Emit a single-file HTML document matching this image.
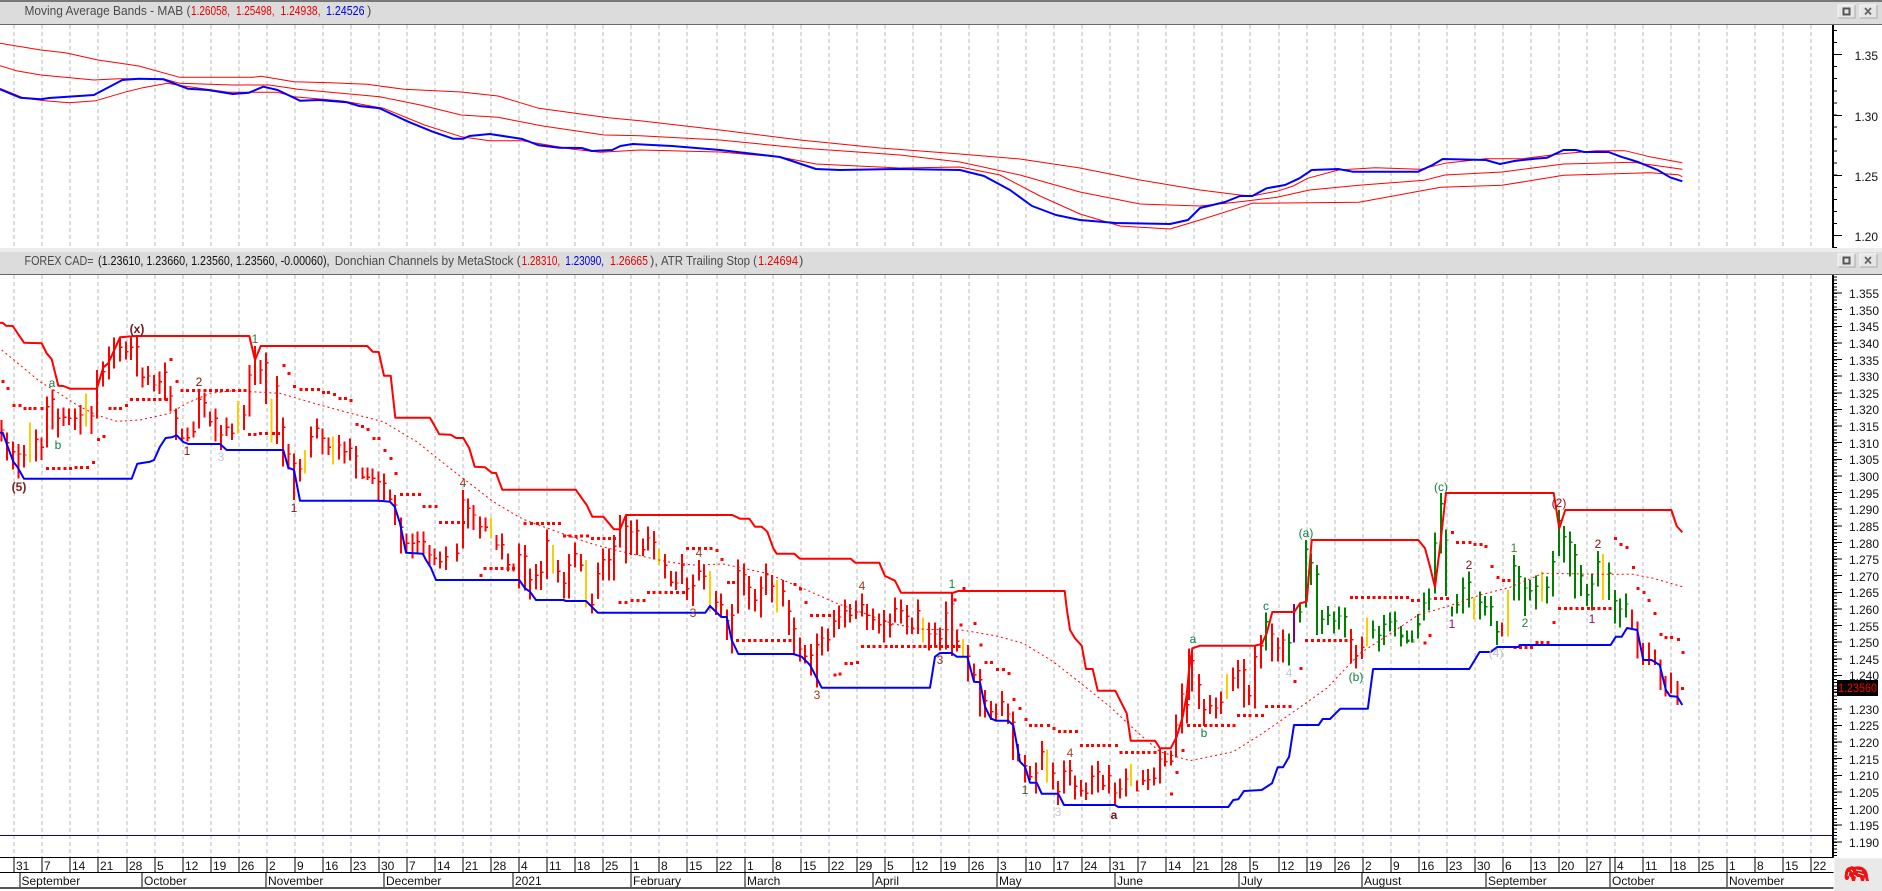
<!DOCTYPE html>
<html><head><meta charset="utf-8"><title>Chart</title>
<style>
html,body{margin:0;padding:0;background:#fff;width:1882px;height:891px;overflow:hidden}
svg{display:block}
text{font-family:"Liberation Sans",Arial,sans-serif;font-size:12px}
text.t{font-size:13px}
.b path{fill:none;stroke-width:6;shape-rendering:crispEdges}
.d{fill:none;stroke:#f00;stroke-width:9;stroke-linecap:square;shape-rendering:crispEdges}
.l{fill:none;stroke-linejoin:round}
.w text{text-anchor:middle;font-size:12px}
</style></head><body>
<svg width="1882" height="891" viewBox="0 0 1882 891" xmlns="http://www.w3.org/2000/svg">
<rect width="1882" height="891" fill="#fff"/>
<!-- frames -->
<rect y="0" width="1882" height="2" fill="#777"/>
<rect y="2" width="1882" height="22" fill="#dcdcdc"/>
<rect y="24" width="1882" height="1" fill="#6a6a6a"/>
<rect y="248" width="1882" height="4" fill="#ececec"/>
<rect y="252" width="1882" height="22" fill="#dcdcdc"/>
<rect y="274" width="1882" height="1" fill="#6a6a6a"/>
<!-- grid -->
<path fill="none" stroke="#b8b8b8" stroke-dasharray="4 3" shape-rendering="crispEdges" d="M14 25V248M42 25V248M70 25V248M98 25V248M127 25V248M155 25V248M183 25V248M211 25V248M239 25V248M267 25V248M295 25V248M323 25V248M351 25V248M379 25V248M407 25V248M435 25V248M463 25V248M491 25V248M519 25V248M547 25V248M575 25V248M603 25V248M631 25V248M659 25V248M687 25V248M717 25V248M745 25V248M773 25V248M801 25V248M829 25V248M857 25V248M885 25V248M913 25V248M941 25V248M969 25V248M998 25V248M1026 25V248M1054 25V248M1082 25V248M1110 25V248M1138 25V248M1166 25V248M1194 25V248M1222 25V248M1250 25V248M1279 25V248M1307 25V248M1335 25V248M1363 25V248M1391 25V248M1419 25V248M1447 25V248M1475 25V248M1503 25V248M1531 25V248M1559 25V248M1587 25V248M1615 25V248M1643 25V248M1671 25V248M1699 25V248M1727 25V248M1755 25V248M1783 25V248M1811 25V248"/>
<path fill="none" stroke="#b8b8b8" stroke-dasharray="4 3" shape-rendering="crispEdges" d="M14 275V857M42 275V857M70 275V857M98 275V857M127 275V857M155 275V857M183 275V857M211 275V857M239 275V857M267 275V857M295 275V857M323 275V857M351 275V857M379 275V857M407 275V857M435 275V857M463 275V857M491 275V857M519 275V857M547 275V857M575 275V857M603 275V857M631 275V857M659 275V857M687 275V857M717 275V857M745 275V857M773 275V857M801 275V857M829 275V857M857 275V857M885 275V857M913 275V857M941 275V857M969 275V857M998 275V857M1026 275V857M1054 275V857M1082 275V857M1110 275V857M1138 275V857M1166 275V857M1194 275V857M1222 275V857M1250 275V857M1279 275V857M1307 275V857M1335 275V857M1363 275V857M1391 275V857M1419 275V857M1447 275V857M1475 275V857M1503 275V857M1531 275V857M1559 275V857M1587 275V857M1615 275V857M1643 275V857M1671 275V857M1699 275V857M1727 275V857M1755 275V857M1783 275V857M1811 275V857"/>
<!-- title text -->
<text class="t" x="24.500" y="15" fill="#4a4a4a" textLength="166" lengthAdjust="spacingAndGlyphs">Moving Average Bands - MAB (</text>
<text class="t" x="191" y="15" fill="#e80000" textLength="39" lengthAdjust="spacingAndGlyphs">1.26058,</text>
<text class="t" x="236" y="15" fill="#e80000" textLength="38.500" lengthAdjust="spacingAndGlyphs">1.25498,</text>
<text class="t" x="280.500" y="15" fill="#e80000" textLength="40" lengthAdjust="spacingAndGlyphs">1.24938,</text>
<text class="t" x="326" y="15" fill="#0000e0" textLength="38.500" lengthAdjust="spacingAndGlyphs">1.24526</text>
<text class="t" x="367" y="15" fill="#4a4a4a">)</text>
<text class="t" x="24.500" y="265" fill="#4a4a4a" textLength="69" lengthAdjust="spacingAndGlyphs">FOREX CAD=</text>
<text class="t" x="98" y="265" fill="#111" textLength="231.500" lengthAdjust="spacingAndGlyphs">(1.23610, 1.23660, 1.23560, 1.23560, -0.00060),</text>
<text class="t" x="334.700" y="265" fill="#4a4a4a" textLength="186" lengthAdjust="spacingAndGlyphs">Donchian Channels by MetaStock (</text>
<text class="t" x="521.600" y="265" fill="#e80000" textLength="38.500" lengthAdjust="spacingAndGlyphs">1.28310,</text>
<text class="t" x="565.300" y="265" fill="#0000e0" textLength="38.700" lengthAdjust="spacingAndGlyphs">1.23090,</text>
<text class="t" x="610" y="265" fill="#e80000" textLength="38" lengthAdjust="spacingAndGlyphs">1.26665</text>
<text class="t" x="650" y="265" fill="#4a4a4a" textLength="8" lengthAdjust="spacingAndGlyphs">),</text>
<text class="t" x="661" y="265" fill="#4a4a4a" textLength="96" lengthAdjust="spacingAndGlyphs">ATR Trailing Stop (</text>
<text class="t" x="758" y="265" fill="#e80000" textLength="40" lengthAdjust="spacingAndGlyphs">1.24694</text>
<text class="t" x="799" y="265" fill="#4a4a4a">)</text>
<!-- window buttons -->
<g shape-rendering="crispEdges">
<rect x="1838" y="5" width="17" height="13" fill="#e6e6e6"/><path d="M1838 18V5H1855" stroke="#f8f8f8" fill="none"/><path d="M1855 5V18H1838" stroke="#aaa" fill="none"/><rect x="1843.500" y="8.500" width="6" height="6" fill="none" stroke="#555" stroke-width="2"/>
<rect x="1860" y="5" width="17" height="13" fill="#e6e6e6"/><path d="M1860 18V5H1877" stroke="#f8f8f8" fill="none"/><path d="M1877 5V18H1860" stroke="#aaa" fill="none"/>
<rect x="1838" y="254" width="17" height="13" fill="#e6e6e6"/><path d="M1838 267V254H1855" stroke="#f8f8f8" fill="none"/><path d="M1855 254V267H1838" stroke="#aaa" fill="none"/><rect x="1843.500" y="257.500" width="6" height="6" fill="none" stroke="#555" stroke-width="2"/>
<rect x="1860" y="254" width="17" height="13" fill="#e6e6e6"/><path d="M1860 267V254H1877" stroke="#f8f8f8" fill="none"/><path d="M1877 254V267H1860" stroke="#aaa" fill="none"/>
</g>
<path d="M1865 8l6 6.500M1871 8l-6 6.500M1865 257l6 6.500M1871 257l-6 6.500" stroke="#666" stroke-width="1.800" fill="none"/>
<!-- panel 1 lines -->
<g class="l" stroke="#f00" stroke-width="1">
<polyline points="0,43.300 40.800,50 65.300,52.700 98,60 138.800,66 179.600,77.300 253,77.300 261,76.300 293.900,81.700 330.600,82.700 367.300,84.300 379.600,86 404,89.300 461.200,92 498,96 538.800,108.300 608.200,117.700 640,120.700 720,130 800,140 880,148 960,154 1020,159 1080,168 1140,180 1200,190 1240,195 1252.300,196 1278.900,190.700 1293.200,186 1307.600,178.300 1338.300,170 1375.100,167.700 1420.200,169.300 1444.800,163.300 1485.700,158.700 1522.600,158.700 1559.400,154 1596.300,150.700 1625,150.700 1649.500,156.700 1682.300,162.700"/>
<polyline points="0,65.700 16.300,70.700 40.800,75 93.900,80 118.400,78.700 163.300,78.700 179.600,83.300 232.700,85 269.400,85 298,89.300 379.600,96.700 420.400,105 461.200,115 498,117.300 542.900,126 604,135 640,135.700 720,140 800,148 900,155 960,162 1020,175 1080,192 1140,204 1200,206 1240,201.700 1276.900,197.300 1309.600,190 1358.800,185.300 1424.300,180.300 1444.800,175 1502,172 1563.500,164 1633.100,162.300 1682.300,169.300"/>
<polyline points="0,88.300 24.500,98.300 44.900,100.700 69.400,102.700 95.900,100.700 126.500,91.700 142.900,87.700 167.300,83.300 183.700,86 228.600,92.300 277.600,92.300 293.900,96.700 342.900,101 383.700,108.300 424.500,125 461.200,136.700 489.800,140.700 522.400,140.700 571.400,149 600,152.300 640,150 720,152 780,157 816,164 900,168 960,167 1000,175 1040,196 1080,214 1120,226 1170,229 1200,220 1240,207.300 1252.300,203.300 1358.800,202.300 1440.700,187.300 1502,185.300 1563.500,175.300 1649.500,172.700 1678.200,174.700 1682.300,176.700"/>
</g>
<polyline class="l" stroke="#00f" stroke-width="2" points="0,89.300 20.400,97.700 40.800,99.300 49,98 93.900,95 122.400,80 138.800,78.700 163.300,79.300 187.800,88.700 208.200,90 232.700,94 249,92.700 263.300,86.700 277.600,90 300,100.700 318.400,100 346.900,102.300 359.200,106 379.600,108.300 408.200,121.700 432.700,131.700 453,138.700 463.300,138.700 469.400,136 489.800,134 522.400,139 538.800,145.300 559.200,147.700 581.600,148 591.800,151 612.200,150 620.400,146 632.700,144 672,146 720,150 780,157 816,169 840,170 900,169 960,170 984,176 1010,190 1032,206 1056,215 1080,220 1116,223 1170,224 1188,220 1200,208 1225,202 1240,196 1252.300,196 1266.600,188.300 1285,185 1299.400,178.300 1311.700,170 1338.300,169 1352.600,171.700 1418.100,171.700 1432.500,165 1442.700,159 1485.700,160 1500,164 1514.400,161 1534.800,158.700 1547.100,157.700 1563.500,150 1575.800,150 1584,152 1608.500,152 1620.800,156.700 1637.200,161.700 1657.700,170 1670,177.300 1682.300,181.300"/>
<!-- bars -->
<g class="b" transform="translate(0,260) scale(.33333)">
<path id="r3" stroke="#f00" d="M5 480V545M21 518V602M39 545V628M56 552V655M72 555V622M108 508V605M124 532V600M141 410V562M157 388V508M174 445V532M191 442V498M207 445V495M225 445V510M242 435V523M275 438V522M291 330V475M309 305V380M327 260V358M342 232V326M360 232V305M378 245V298M393 232V300M411 230V350M427 322V382M444 318V375M462 345V395M478 335V402M495 307V422M511 378V455M528 445V540M546 505V545M562 503V545M580 485V532M597 388V505M613 398V472M630 455V500M646 445V545M663 495V570M680 472V528M696 490V540M732 435V510M748 315V470M765 258V375M781 300V372M798 278V432M831 348V552M849 472V620M865 552V628M882 580V720M900 597V665M933 500V593M951 475V535M968 505V583M985 532V585M1017 525V598M1034 545V610M1050 535V602M1068 558V655M1087 622V657M1102 622V660M1118 625V672M1135 635V722M1152 640V720M1170 688V725M1185 705V795M1203 772V880M1220 820V878M1237 820V895M1252 815V880M1270 815V885M1288 855V915M1303 865V915M1320 875V925M1338 860V930M1371 850V905M1389 690V865M1404 715V805M1421 735V810M1440 770V835M1456 772V815M1490 825V870"/>
<use href="#r3" x="5" stroke-dasharray="0 28 4 2000"/>
<path stroke="#fc0" d="M90 487V608M258 400V500M714 423V520M815 415V548M915 570V640M999 530V613M1473 772V835"/>
</g>
<g class="b" transform="translate(480,400) scale(.33333)">
<path id="r6" stroke="#f00" d="M66 400V478M84 460V515M100 490V515M117 430V565M135 435V572M150 505V598M168 492V568M183 483V570M201 388V537M234 480V548M252 516V596M267 462V595M285 427V503M303 462V515M336 580V640M354 487V597M369 445V542M387 445V542M402 405V542M420 345V442M438 345V490M453 362V465M471 358V465M489 415V468M504 380V452M522 393V478M555 462V535M573 513V560M588 515V570M606 462V552M621 532V600M639 523V618M657 480V542M672 495V568M708 573V645M723 580V650M741 628V720M756 612V760M774 478V640M792 490V587M807 528V628M825 567V635M843 530V652M858 490V585M876 525V607M909 540V620M927 600V705M942 652V760M960 713V785M975 735V790M993 732V827M1011 700V862M1026 680V767M1044 685V755M1062 630V712M1077 617V687M1095 598V682M1110 612V668M1128 602V657M1146 580V650M1161 612V690M1179 625V690M1197 640V700M1212 630V728M1230 640V712M1245 592V668M1263 598V670M1281 615V703M1296 652V702M1314 598V702M1347 668V752M1365 668V742M1380 682V752M1398 605V748M1416 578V768M1431 690V755M1464 735V845M1482 790V845"/>
<use href="#r6" x="5" stroke-dasharray="0 32 4 2000"/>
<path stroke="#fc0" d="M219 435V520M318 480V622M537 445V495M690 513V635M891 540V638M1329 652V728M1449 717V770"/>
</g>
<g class="b" transform="translate(960,620) scale(.33333)">
<path id="r9" stroke="#f00" d="M60 147V290M75 210V292M93 243V300M108 250V302M126 213V288M144 250V312M159 275V420M174 372V425M195 405V488M210 438V480M228 427V520M246 363V450M279 428V508M294 483V555M312 422V520M330 420V497M345 467V538M363 480V530M378 488V540M396 437V523M414 423V517M429 465V510M447 435V520M465 487V555M480 475V536M498 445V530M531 482V515M549 450V495M564 447V510M582 443V497M600 385V490M615 393V440M633 392V437M648 283V412M666 190V340M681 222V310M687 85V240M696 90V215M717 162V267M732 237V318M750 225V282M768 232V296M783 215V282M819 142V213M834 120V205M852 117V262M867 195V255M885 78V265"/>
<use href="#r9" x="5" stroke-dasharray="0 30 4 2000"/>
<path stroke="#fc0" d="M261 388V488M513 432V498M801 162V237"/>
</g>
<g class="b" transform="translate(960,400) scale(.33333)">
<path id="r7" stroke="#f00" d="M903 705V805M936 670V785M954 712V785M969 688V787M1173 687V790M1188 735V805M1206 710V777"/>
<use href="#r7" x="5" stroke-dasharray="0 30 4 2000"/>
<path stroke="#fc0" d="M1221 652V740"/>
<path id="g7" stroke="#008000" d="M918 637V752M987 700V797M1020 608V668M1038 420V622M1053 460V555M1071 495V705M1086 630V702M1104 618V675M1122 635V700M1137 620V688M1155 622V712M1239 662V715M1257 678V755M1272 645V735M1290 638V695M1305 635V710M1323 678V740M1341 692V728M1356 692V728M1374 643V715"/>
<use href="#g7" x="5" stroke-dasharray="0 26 4 2000"/>
<path stroke="#800080" d="M1002 612V727"/>
</g>
<g class="b" transform="translate(1400,340) scale(.33333)">
<path id="g8" stroke="#008000" d="M3 858V920M21 872V910M36 875V908M54 822V895M72 757V842M87 745V812M105 577V760M123 459V640M138 568V768M156 800V830M171 762V820M189 712V820M207 695V803M240 755V838M255 768V827M273 768V858M291 843V915M342 645V782M357 678V782M375 712V828M390 720V782M408 707V808M441 710V790M459 633V770M477 510V648M492 558V668M510 575V710M525 612V775M543 675V768M561 732V798M576 700V812M594 633V740M627 668V780M645 750V850M660 775V862M678 760V832"/>
<use href="#g8" x="5" stroke-dasharray="0 30 4 2000"/>
<path stroke="#fc0" d="M222 772V838M324 750V890M426 695V785M609 642V780"/>
<path stroke="#f00" d="M306 847V890"/>
</g>
<g transform="translate(1240,560)" fill="none" stroke="#f00" stroke-width="2" shape-rendering="crispEdges">
<path d="M392 49.300V68.300M397.500 61.700V98.300M403 83V105M409 82.700V105M415 89.300V105M420.500 99.300V130M425.500 116V136.700M431 112.300V133.300M437.500 121V145"/>
</g>
<!-- trailing stop dots -->
<g transform="translate(0,260) scale(.33333)"><path class="d" d="M9 365h0M24 385h0M42 436h0M60 436h0M75 445h0M90 445h0M105 445h0M126 445h0M142 625h0M160 625h0M177 625h0M195 625h0M212 625h0M228 622h0M245 622h0M262 622h0M280 607h0M295 538h0M312 529h0M330 445h0M345 445h0M362 445h0M380 437h0M395 418h0M412 418h0M430 418h0M447 418h0M463 418h0M480 418h0M500 418h0M513 298h0M531 364h0M546 391h0M563 391h0M580 391h0M597 391h0M615 391h0M632 391h0M650 391h0M665 391h0M682 391h0M700 391h0M718 391h0M735 391h0M748 523h0M765 523h0M782 520h0M800 520h0M820 520h0M835 520h0M852 316h0M867 340h0M884 379h0M903 388h0M920 388h0M937 388h0M955 388h0M970 397h0M985 397h0M1003 403h0M1020 415h0M1037 415h0M1053 421h0M1071 493h0M1087 499h0M1104 508h0M1122 535h0M1137 535h0M1155 571h0M1173 595h0M1188 640h0M1205 703h0M1222 703h0M1240 703h0M1258 703h0M1272 739h0M1290 739h0M1308 739h0M1322 787h0M1340 787h0M1357 787h0M1375 787h0M1390 787h0"/></g>
<g transform="translate(480,400) scale(.33333)"><path class="d" d="M3 526h0M15 505h0M33 505h0M50 505h0M66 505h0M84 505h0M100 505h0M135 370h0M155 370h0M172 370h0M187 370h0M205 370h0M220 370h0M238 370h0M253 408h0M270 408h0M288 410h0M305 408h0M322 408h0M338 415h0M355 415h0M372 415h0M388 415h0M403 415h0M420 607h0M438 607h0M456 601h0M474 601h0M492 601h0M505 577h0M522 577h0M540 577h0M558 577h0M575 577h0M592 577h0M610 577h0M622 445h0M640 445h0M658 445h0M676 445h0M693 445h0M711 451h0M726 478h0M745 547h0M760 547h0M773 721h0M790 721h0M808 721h0M825 721h0M843 721h0M860 721h0M878 721h0M895 721h0M913 721h0M930 721h0M945 553h0M962 567h0M978 607h0M995 646h0M1012 646h0M1030 646h0M1048 646h0M1065 825h0M1080 822h0M1098 790h0M1115 790h0M1132 787h0M1148 739h0M1165 739h0M1182 739h0M1200 739h0M1218 739h0M1235 739h0M1250 739h0M1268 739h0M1285 739h0M1302 739h0M1320 739h0M1335 739h0M1352 739h0M1368 739h0M1385 739h0M1403 739h0M1420 739h0M1437 739h0M1452 565h0"/></g>
<g transform="translate(960,620) scale(.33333)"><path class="d" d="M-15 -60h0M3 15h0M45 10h0M63 75h0M78 127h0M95 127h0M113 148h0M130 148h0M147 160h0M162 238h0M180 265h0M198 298h0M212 316h0M228 316h0M245 316h0M265 316h0M282 325h0M298 334h0M315 334h0M332 334h0M349 334h0M365 376h0M382 376h0M398 376h0M415 376h0M432 376h0M449 376h0M470 376h0M483 397h0M500 397h0M517 397h0M534 397h0M550 397h0M567 397h0M585 397h0M635 522h0M651 457h0M669 391h0M686 316h0M703 316h0M719 316h0M736 316h0M753 316h0M770 316h0M788 316h0M805 316h0M822 316h0M836 286h0M853 286h0M870 286h0M890 286h0M907 286h0M920 259h0M937 259h0M955 259h0M972 259h0M990 259h0M1005 184h0M1023 145h0"/></g>
<g transform="translate(960,400) scale(.33333)"><path class="d" d="M1040 721h0M1058 721h0M1075 721h0M1092 721h0M1108 721h0M1125 721h0M1142 721h0M1158 721h0M1175 592h0M1190 592h0M1208 592h0M1225 592h0M1242 592h0M1258 592h0M1275 592h0M1292 592h0M1310 592h0"/></g>
<g transform="translate(1400,340) scale(.33333)"><path class="d" d="M5 772h0M22 772h0M38 781h0M55 781h0M75 909h0M90 886h0M107 775h0M125 775h0M142 775h0M158 577h0M173 607h0M190 607h0M210 607h0M225 613h0M243 613h0M258 619h0M276 679h0M294 712h0M310 721h0M327 721h0M345 922h0M361 922h0M378 922h0M395 922h0M411 907h0M426 907h0M444 907h0M462 847h0M478 805h0M496 805h0M513 805h0M531 805h0M548 805h0M565 805h0M580 805h0M597 805h0M613 805h0M630 805h0M647 595h0M663 613h0M681 622h0M700 682h0M714 745h0M732 757h0M747 781h0M765 820h0M783 883h0M798 892h0M815 892h0M835 898h0M849 937h0M848 1045h0"/></g>
<!-- MA dotted -->
<polyline class="l" stroke="#f00" stroke-width="1" stroke-dasharray="2 3" points="1.700,350 20,365 40,381.700 56.700,391.700 76.700,405 96.700,415 116.700,421.300 140,420 170,413.300 186.700,403.300 210,393.300 233.300,390.700 280,393.300 320,405 353.300,414 383.300,421.700 416.700,441.700 450,468.300 481.700,492.700 493.300,501.700 518.300,516.700 526.700,520.700 560,532.700 590,543.300 615,550 646.700,557.300 670,562.300 693.300,565 723.300,564 766.700,573.300 806.700,590 836.700,603.300 893.300,624 923.300,629.300 961.700,630 996.700,636 1023.300,643.300 1053.300,661.700 1076.700,680 1110,706.700 1136.700,731.700 1160,751.700 1190,760.700 1233.300,751.700 1260,735 1303.300,705 1326.700,688.300 1360,653.300 1393.300,631.700 1418.300,615 1446.700,606.700 1480,595 1510,587.300 1543.300,573.300 1603.300,574.300 1633.300,574.300 1653.300,578.300 1682.300,586.700"/>
<!-- Donchian upper -->
<polyline class="l" stroke="#f00" stroke-width="2" points="0,322.700 3,323 6,325.700 12.700,326 24,342.700 41.700,343.300 46.700,353.300 51.700,359.300 58.300,385.700 63.300,386 70,388.700 96.700,388.700 98.300,384 103.300,367.300 108.300,363.300 120,337.300 126.700,336.700 136.700,336 249.300,336 255,360 260.700,346 367.300,346 372.700,351.700 378.700,352 384,375.700 390.700,375.700 395.300,417.700 430,417.700 439.300,434.300 450.700,434.700 456,438 463.300,438 469.300,448.300 474.700,466.700 485,467.300 491.700,472.700 496,473 502.300,489.700 575.700,489.700 586.700,505 592.300,516.700 603.300,516.700 614,529.300 620,529.300 626,515 732.300,515 740,518.700 749.300,518.700 755,526.700 761.700,526.700 767.300,531.700 773.300,548.300 776.700,553.700 794.300,553.700 800,558.700 850.700,558.700 855.300,562.700 879.300,562.700 885,576 895,580.700 901,592.700 953.300,592.700 958.300,591 1064.700,591 1066.700,608.300 1070,630 1075,638.300 1081.700,645.700 1086,669 1092.700,669 1097.700,690.700 1115.300,690.700 1123.300,706.700 1126.700,713.300 1130.700,740.700 1155,740.700 1160,748.300 1170.700,748.300 1176.700,736.700 1182.700,716.700 1186.700,695 1189,670 1192.300,648.300 1200,645.700 1255,645.700 1261.700,644 1266.700,633.300 1272.300,612 1294.300,612 1300,603.300 1306.700,601.700 1311.700,540 1418.300,540 1425,548.300 1430,566.700 1435,587.300 1440,546.700 1446,493 1553.700,493 1559.300,528.300 1565.300,510 1671.300,510 1676.700,526 1682.300,532.300"/>
<!-- Donchian lower -->
<polyline class="l" stroke="#00f" stroke-width="2" points="0,432.700 2.700,432.700 8.300,448.300 13.300,461.700 17.300,466.700 24,478.700 131.700,478.700 137.300,463.700 150,461.700 154,460 160,446.700 165.700,438 171.700,437.300 176.700,435.300 183.300,442 188.300,444 220,444 226.700,450 283.300,450 288.300,467.700 294,470 300,500.700 378.300,500.700 390,501.700 394.700,506.700 400,523.300 406,552.700 422.700,553.700 426,560 431,568 436,580 519.300,580 525,588.300 530,591.700 536,600 563.300,600 566,601 586,601 597.700,612.700 705.300,612.700 710,606 721.300,617 726.700,617 731.700,640 738.300,654 793.300,654 801.700,656.700 810,665 821.700,687.700 930,687.700 935,656.700 940,653 951.700,653 956.700,656.700 967.300,656.700 974,681.700 980,682.300 985,706.700 990.700,718.300 996,720.700 1008.300,720.700 1013.300,725.300 1020,761.700 1025,766.700 1030,782.700 1036.700,782.700 1041.700,793.700 1058.300,793.700 1064,805 1115,805 1118.300,807 1228.300,807 1233.300,800 1238.300,799.300 1244,791 1261.700,790 1272,783.300 1277.700,767.300 1283,767.300 1289.100,756.700 1294,725 1318.600,725 1322.700,719 1330,719 1340.300,708.700 1367.800,708.700 1373.100,669 1469.300,669 1479.600,652 1490.600,652 1497.200,647 1518.500,647 1519.700,645 1610.600,645 1615.900,636.700 1621.700,636.700 1627,628 1637.200,630 1643.300,660 1651.500,660 1659.700,665 1665.900,690 1670,696 1677.300,696.700 1682.300,705"/>
<!-- wave labels -->
<g class="w">
<text x="19" y="491" fill="#7a2020" font-weight="bold">(5)</text>
<text x="58" y="449" fill="#108040">b</text>
<text x="52" y="387" fill="#108040">a</text>
<text x="137" y="333" fill="#701818" style="font-weight:bold">(x)</text>
<text x="255" y="343" fill="#308040">1</text>
<text x="199" y="386" fill="#801010">2</text>
<text x="187" y="455" fill="#801818">1</text>
<text x="221" y="461" fill="#c8c8c8">3</text>
<text x="294" y="512" fill="#701030">1</text>
<text x="463" y="487" fill="#904020">4</text>
<text x="699" y="557" fill="#904020">4</text>
<text x="693" y="617" fill="#a03820">3</text>
<text x="817" y="699" fill="#a03820">3</text>
<text x="862" y="590" fill="#904020">4</text>
<text x="952" y="588" fill="#208040">1</text>
<text x="940" y="664" fill="#a03820">3</text>
<text x="1025" y="794" fill="#605010">1</text>
<text x="1058" y="816" fill="#c8c8c8">3</text>
<text x="1070" y="757" fill="#a04820">4</text>
<text x="1114" y="819" fill="#701020" style="font-weight:bold">a</text>
<text x="1193" y="643" fill="#108040">a</text>
<text x="1204" y="737" fill="#108040">b</text>
<text x="1289" y="677" fill="#c8c8c8">4</text>
<text x="1356" y="681" fill="#108040">(b)</text>
<text x="1266" y="610" fill="#108040">c</text>
<text x="1306" y="537" fill="#108040">(a)</text>
<text x="1441" y="491" fill="#108040">(c)</text>
<text x="1452" y="628" fill="#901060">1</text>
<text x="1559" y="507" fill="#801010">(2)</text>
<text x="1469" y="569" fill="#801010">2</text>
<text x="1514" y="552" fill="#408040">1</text>
<text x="1525" y="627" fill="#208040">2</text>
<text x="1592" y="623" fill="#901060">1</text>
<text x="1598" y="548" fill="#801010">2</text>
<text x="1496" y="657" fill="#c0c0c0">(4)</text>
</g>
<!-- bottom horizontal -->
<rect y="835" width="1832" height="1" fill="#0000d0"/>
<!-- y axes -->
<g shape-rendering="crispEdges" fill="none" stroke="#000">
<path stroke-width="2" d="M1833 25V248M1833 275V857"/>
<path stroke-width="4" stroke-dasharray="1 11.060" d="M1835 30V248"/>
<path stroke-width="4" stroke-dasharray="1 2.326" d="M1835 276.370V857"/>
<path d="M1832 54.500h10M1832 115.500h10M1832 175.500h10M1832 235.500h10M1832 293h10M1832 309.600h10M1832 326.300h10M1832 342.900h10M1832 359.500h10M1832 376.200h10M1832 392.800h10M1832 409.400h10M1832 426h10M1832 442.700h10M1832 459.300h10M1832 475.900h10M1832 492.600h10M1832 509.200h10M1832 525.800h10M1832 542.500h10M1832 559.100h10M1832 575.700h10M1832 592.300h10M1832 609h10M1832 625.600h10M1832 642.200h10M1832 658.900h10M1832 675.500h10M1832 692.100h10M1832 708.800h10M1832 725.400h10M1832 742h10M1832 758.600h10M1832 775.300h10M1832 791.900h10M1832 808.500h10M1832 825.200h10M1832 841.800h10"/>
</g>
<g text-anchor="end" fill="#111">
<text x="1878" y="60">1.35</text><text x="1878" y="121">1.30</text><text x="1878" y="181">1.25</text><text x="1878" y="241">1.20</text>
<text x="1879" y="298">1.355</text><text x="1879" y="315">1.350</text><text x="1879" y="331">1.345</text><text x="1879" y="348">1.340</text><text x="1879" y="365">1.335</text><text x="1879" y="381">1.330</text><text x="1879" y="398">1.325</text><text x="1879" y="414">1.320</text><text x="1879" y="431">1.315</text><text x="1879" y="448">1.310</text><text x="1879" y="464">1.305</text><text x="1879" y="481">1.300</text><text x="1879" y="498">1.295</text><text x="1879" y="514">1.290</text><text x="1879" y="531">1.285</text><text x="1879" y="548">1.280</text><text x="1879" y="564">1.275</text><text x="1879" y="581">1.270</text><text x="1879" y="597">1.265</text><text x="1879" y="614">1.260</text><text x="1879" y="631">1.255</text><text x="1879" y="647">1.250</text><text x="1879" y="664">1.245</text><text x="1879" y="680">1.240</text><text x="1879" y="714">1.230</text><text x="1879" y="730">1.225</text><text x="1879" y="747">1.220</text><text x="1879" y="764">1.215</text><text x="1879" y="780">1.210</text><text x="1879" y="797">1.205</text><text x="1879" y="814">1.200</text><text x="1879" y="830">1.195</text><text x="1879" y="847">1.190</text>
</g>
<rect x="1837" y="680" width="41" height="16" fill="#000"/>
<text x="1838" y="692" fill="#f00" textLength="39" lengthAdjust="spacingAndGlyphs">1.23560</text>
<!-- time axis -->
<rect y="857" width="1882" height="34" fill="#fff"/>
<g shape-rendering="crispEdges" fill="none" stroke="#000">
<path d="M0 857.500H1834M0 872.500H1834"/>
<path stroke="#555" stroke-width="2" d="M0 888H1834"/>
<path d="M14 857V872M42 857V872M70 857V872M98 857V872M127 857V872M155 857V872M183 857V872M211 857V872M239 857V872M267 857V872M295 857V872M323 857V872M351 857V872M379 857V872M407 857V872M435 857V872M463 857V872M491 857V872M519 857V872M547 857V872M575 857V872M603 857V872M631 857V872M659 857V872M687 857V872M717 857V872M745 857V872M773 857V872M801 857V872M829 857V872M857 857V872M885 857V872M913 857V872M941 857V872M969 857V872M998 857V872M1026 857V872M1054 857V872M1082 857V872M1110 857V872M1138 857V872M1166 857V872M1194 857V872M1222 857V872M1250 857V872M1279 857V872M1307 857V872M1335 857V872M1363 857V872M1391 857V872M1419 857V872M1447 857V872M1475 857V872M1503 857V872M1531 857V872M1559 857V872M1587 857V872M1610 857V872M1615 857V872M1643 857V872M1671 857V872M1699 857V872M1727 857V872M1755 857V872M1783 857V872M1811 857V872"/>
<path d="M20 872V887M142 872V887M266 872V887M384 872V887M513 872V887M631 872V887M745 872V887M873 872V887M997 872V887M1115 872V887M1239 872V887M1362 872V887M1486 872V887M1610 872V887M1727 872V887"/>
</g>
<g fill="#111">
<text x="16" y="870">31</text><text x="44" y="870">7</text><text x="72" y="870">14</text><text x="100" y="870">21</text><text x="129" y="870">28</text><text x="157" y="870">5</text><text x="185" y="870">12</text><text x="213" y="870">19</text><text x="241" y="870">26</text><text x="269" y="870">2</text><text x="297" y="870">9</text><text x="325" y="870">16</text><text x="353" y="870">23</text><text x="381" y="870">30</text><text x="409" y="870">7</text><text x="437" y="870">14</text><text x="465" y="870">21</text><text x="493" y="870">28</text><text x="521" y="870">4</text><text x="549" y="870">11</text><text x="577" y="870">18</text><text x="605" y="870">25</text><text x="633" y="870">1</text><text x="661" y="870">8</text><text x="689" y="870">15</text><text x="719" y="870">22</text><text x="747" y="870">1</text><text x="775" y="870">8</text><text x="803" y="870">15</text><text x="831" y="870">22</text><text x="859" y="870">29</text><text x="887" y="870">5</text><text x="915" y="870">12</text><text x="943" y="870">19</text><text x="971" y="870">26</text><text x="1000" y="870">3</text><text x="1028" y="870">10</text><text x="1056" y="870">17</text><text x="1084" y="870">24</text><text x="1112" y="870">31</text><text x="1140" y="870">7</text><text x="1168" y="870">14</text><text x="1196" y="870">21</text><text x="1224" y="870">28</text><text x="1252" y="870">5</text><text x="1281" y="870">12</text><text x="1309" y="870">19</text><text x="1337" y="870">26</text><text x="1365" y="870">2</text><text x="1393" y="870">9</text><text x="1421" y="870">16</text><text x="1449" y="870">23</text><text x="1477" y="870">30</text><text x="1505" y="870">6</text><text x="1533" y="870">13</text><text x="1561" y="870">20</text><text x="1589" y="870">27</text><text x="1617" y="870">4</text><text x="1645" y="870">11</text><text x="1673" y="870">18</text><text x="1701" y="870">25</text><text x="1729" y="870">1</text><text x="1757" y="870">8</text><text x="1785" y="870">15</text><text x="1813" y="870">22</text>
<text x="21.500" y="885">September</text><text x="144" y="885">October</text><text x="268" y="885">November</text><text x="386" y="885">December</text><text x="515" y="885">2021</text><text x="633" y="885">February</text><text x="747" y="885">March</text><text x="875" y="885">April</text><text x="999" y="885">May</text><text x="1117" y="885">June</text><text x="1241" y="885">July</text><text x="1364" y="885">August</text><text x="1488" y="885">September</text><text x="1612" y="885">October</text><text x="1729" y="885">November</text>
</g>
<!-- logo -->
<rect x="1834" y="858" width="48" height="33" fill="#e9e9e9"/>
<path d="M1834 890V858H1882" stroke="#fafafa" fill="none"/>
<path fill="#f01010" d="M1845 874c0-4 2-7 5-7 1-1 3-1 4 0 3-1 8-1 11 2 2 2 3 5 3 8l1 4h-3l-1-4-1 4h-3l-1-4h-4l-1 4h-3l-1-4-2-1v2c0 1-1 2-2 2-2 0-3-2-2-6z"/>
<path fill="none" stroke="#f4f4f4" stroke-width="1" d="M1851 870l2 2M1856 870l6 1M1858 873l6 2M1854 875l4 3M1849 872l-1 4"/>
</svg>
</body></html>
